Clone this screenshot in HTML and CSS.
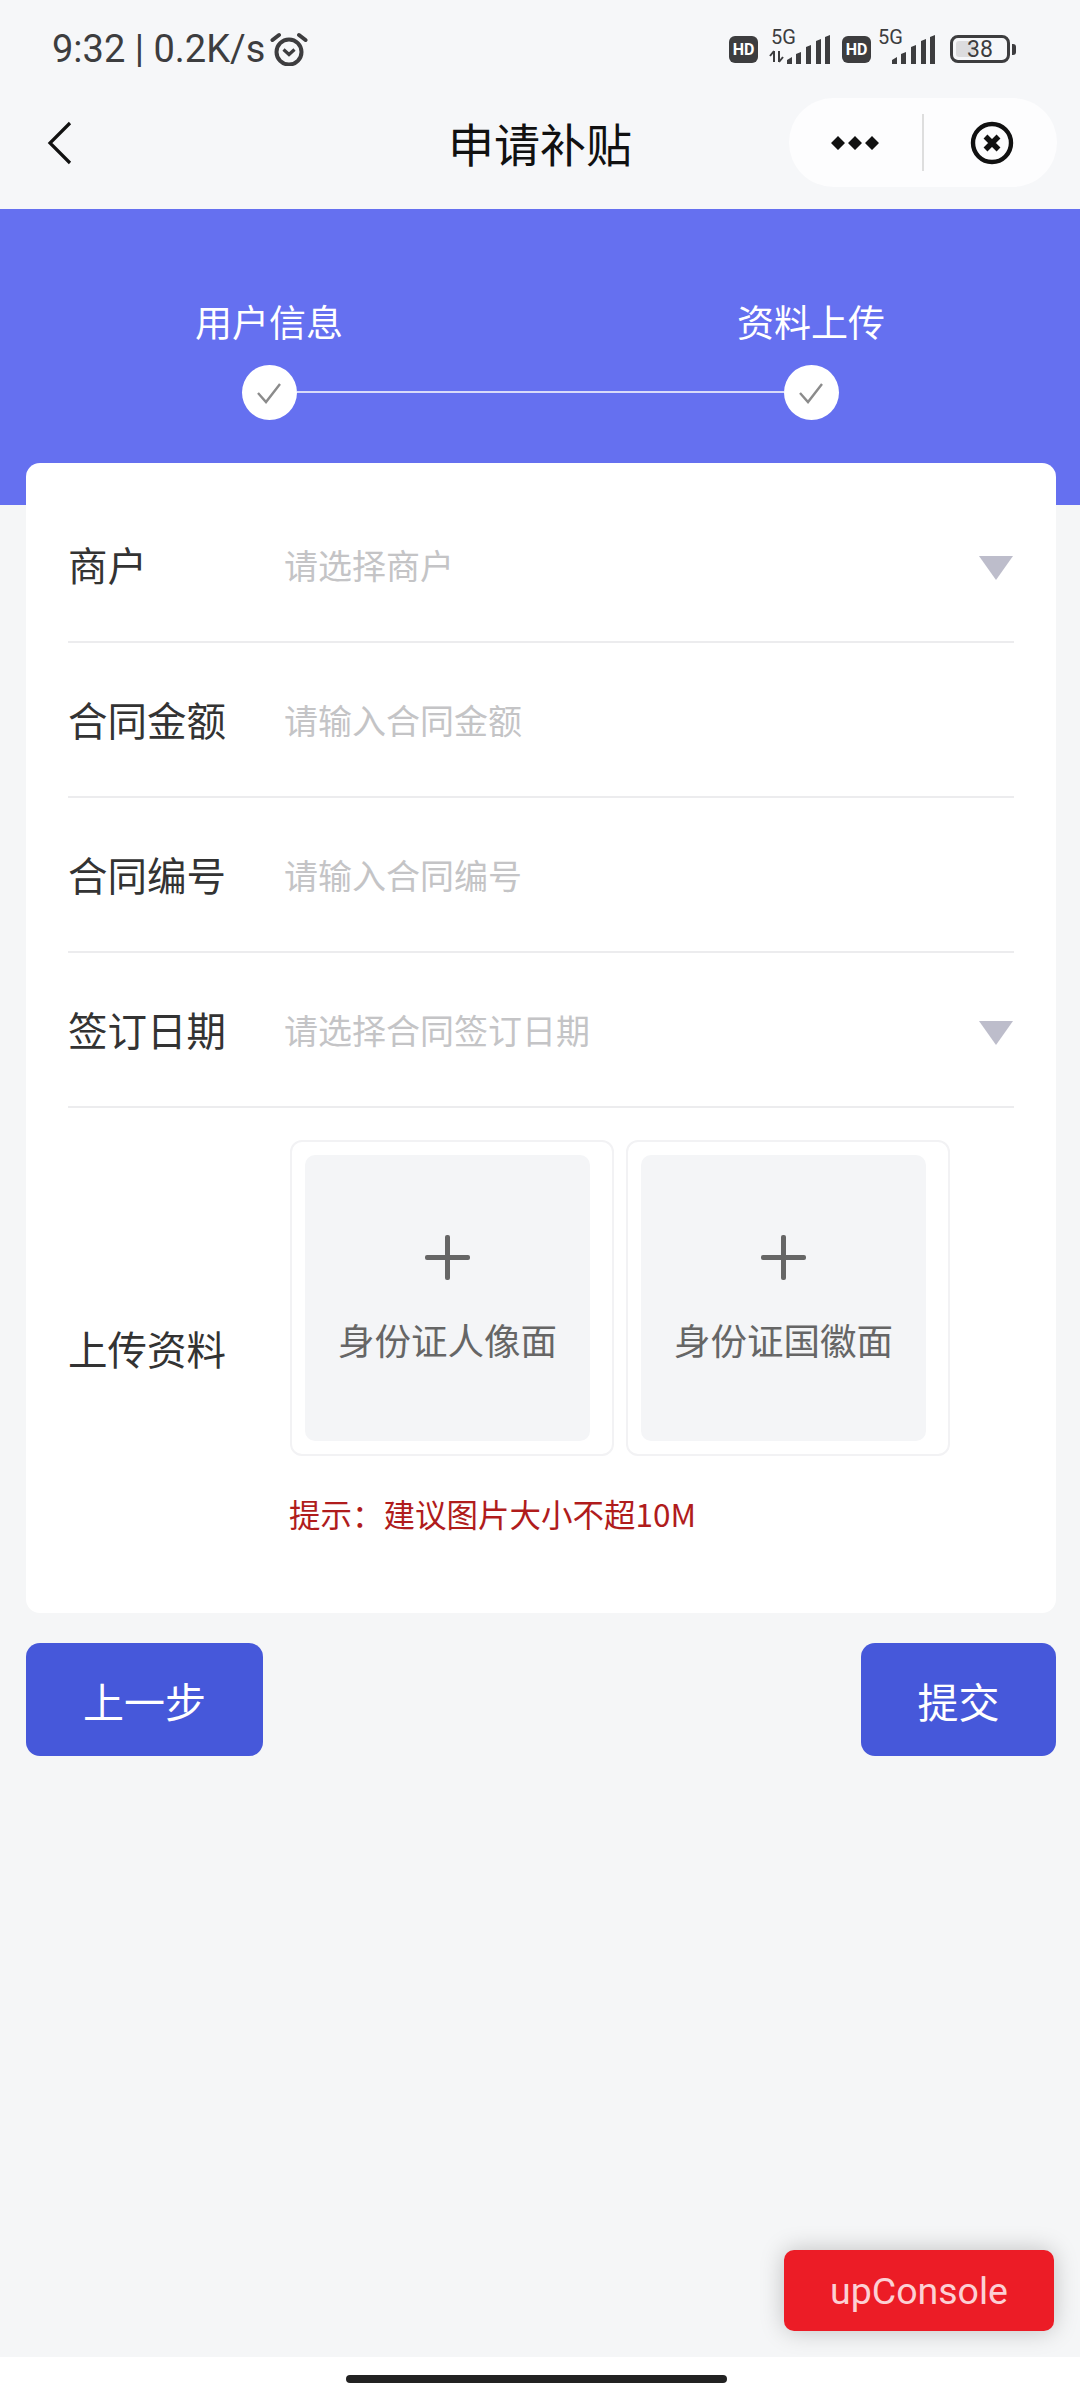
FILE: index.html
```html
<!DOCTYPE html>
<html lang="zh-CN">
<head>
  <meta charset="UTF-8" />
  <meta name="viewport" content="width=device-width, initial-scale=1.0" />
  <title>申请补贴</title>
  <link rel="stylesheet" href="styles.css">
</head>
<body>
  <div class="page">
    <div class="status-bar">
      <div class="status-left">
        <span>9:32 | 0.2K/s</span>
        <svg class="alarm" width="38" height="34" viewBox="0 0 38 34">
          <circle cx="19" cy="20" r="12.5" fill="none" stroke="#3d3d3f" stroke-width="4"/>
          <path d="M13.5 17.5l5.5 5 5.5-5" fill="none" stroke="#3d3d3f" stroke-width="3.2"/>
          <path d="M2.5 8L9 3M35.5 8L29 3" stroke="#3d3d3f" stroke-width="4" stroke-linecap="round"/>
        </svg>
      </div>
      <div class="status-right">
        <span class="hd">HD</span>
        <svg class="signal" width="62" height="42" viewBox="0 -6 62 42">
          <text x="2" y="13" font-size="20" font-family="Roboto, sans-serif" fill="#3d3d3f">5G</text>
          <path d="M5 20v11M1 25l4-5M10 20v11M10 31l4-5" stroke="#3d3d3f" stroke-width="2" fill="none"/>
          <path d="M18 33v-4l5-3v7zM27 33v-10l5-2v12zM37 33V16l5-2v19zM47 33V10l5-2v25zM56 33V6l5-2v29z" fill="#3d3d3f"/>
        </svg>
        <span class="hd hd-second">HD</span>
        <svg class="signal signal-short" width="58" height="42" viewBox="0 -6 58 42">
          <text x="0" y="13" font-size="20" font-family="Roboto, sans-serif" fill="#3d3d3f">5G</text>
          <path d="M14 33v-4l5-3v7zM23 33v-10l5-2v12zM33 33V16l5-2v19zM43 33V10l5-2v25zM52 33V6l5-2v29z" fill="#3d3d3f"/>
        </svg>
        <div class="battery">
          <div class="battery-body"><span class="battery-fill"></span><span class="battery-num">38</span></div>
          <span class="battery-nub"></span>
        </div>
      </div>
    </div>

    <div class="nav-bar">
      <svg class="back" width="26" height="44" viewBox="0 0 26 44">
        <path d="M23 2L3 22l20 20" fill="none" stroke="#111" stroke-width="3.2"/>
      </svg>
      <div class="nav-title">申请补贴</div>
      <div class="capsule">
        <svg class="capsule-dots" width="48" height="14" viewBox="0 0 48 14">
          <path d="M7 0l7 7-7 7-7-7zM24 0l7 7-7 7-7-7zM41 0l7 7-7 7-7-7z" fill="#111"/>
        </svg>
        <span class="capsule-line"></span>
        <svg class="capsule-close" width="44" height="44" viewBox="0 0 44 44">
          <circle cx="22" cy="22" r="19" fill="none" stroke="#111" stroke-width="4.4"/>
          <path d="M15.5 15.5l13 13M28.5 15.5l-13 13" stroke="#111" stroke-width="5.5"/>
        </svg>
      </div>
    </div>

    <div class="hero">
      <div class="steps">
        <div class="step">
          <div class="step-label">用户信息</div>
          <div class="step-dot">
            <svg width="26" height="22" viewBox="0 0 26 22"><path d="M2 11l8 9L24 2" fill="none" stroke="#8b8b8b" stroke-width="2.4"/></svg>
          </div>
        </div>
        <div class="step-line"></div>
        <div class="step">
          <div class="step-label">资料上传</div>
          <div class="step-dot">
            <svg width="26" height="22" viewBox="0 0 26 22"><path d="M2 11l8 9L24 2" fill="none" stroke="#8b8b8b" stroke-width="2.4"/></svg>
          </div>
        </div>
      </div>
    </div>

    <div class="card">
      <div class="row">
        <div class="row-label">商户</div>
        <div class="row-value">请选择商户</div>
        <span class="arrow"></span>
      </div>
      <div class="row">
        <div class="row-label">合同金额</div>
        <div class="row-value">请输入合同金额</div>
      </div>
      <div class="row">
        <div class="row-label">合同编号</div>
        <div class="row-value">请输入合同编号</div>
      </div>
      <div class="row">
        <div class="row-label">签订日期</div>
        <div class="row-value">请选择合同签订日期</div>
        <span class="arrow"></span>
      </div>
      <div class="upload-row">
        <div class="row-label">上传资料</div>
        <div class="upload-list">
          <div class="upload-box">
            <div class="upload-inner">
              <span class="plus"></span>
              <div class="upload-text">身份证人像面</div>
            </div>
          </div>
          <div class="upload-box">
            <div class="upload-inner">
              <span class="plus"></span>
              <div class="upload-text">身份证国徽面</div>
            </div>
          </div>
        </div>
      </div>
      <div class="tip">提示：建议图片大小不超10M</div>
    </div>

    <div class="actions">
      <div class="btn btn-prev">上一步</div>
      <div class="btn btn-submit">提交</div>
    </div>

    <div class="spacer"></div>

    <div class="home-bar"><span class="home-line"></span></div>
    <div class="console-btn">upConsole</div>
  </div>
</body>
</html>
```

FILE: styles.css
```css
* {
  box-sizing: border-box;
}
body {
  margin: 0;
  background-color: #f5f6f7;
  color: #333;
  font-family: "Noto Sans CJK SC", Roboto, sans-serif;
}
.page {
  position: relative;
  display: flex;
  flex-direction: column;
  height: 2400px;
  overflow: hidden;
}

/* status bar */
.status-bar {
  display: flex;
  justify-content: space-between;
  align-items: center;
  height: 98px;
  padding: 0 64px 0 52px;
  background-color: #f6f7f9;
  color: #3d3d3f;
}
.status-left {
  display: flex;
  align-items: center;
  gap: 5px;
  font-family: Roboto, sans-serif;
  font-size: 38px;
  line-height: 1;
}
.status-right {
  display: flex;
  align-items: center;
  height: 40px;
}
.hd {
  display: flex;
  justify-content: center;
  align-items: center;
  width: 29px;
  height: 27px;
  border-radius: 6px;
  background-color: #3d3d3f;
  color: #fff;
  font-family: Roboto, sans-serif;
  font-size: 16px;
  font-weight: 700;
}
.signal {
  margin-left: 11px;
  margin-bottom: 6px;
}
.hd-second {
  margin-left: 11px;
}
.signal-short {
  margin-left: 7px;
}
.battery {
  display: flex;
  align-items: center;
  gap: 2px;
  margin-left: 14px;
}
.battery-body {
  position: relative;
  display: flex;
  justify-content: center;
  align-items: center;
  width: 60px;
  height: 28px;
  border: 3px solid #3d3d3f;
  border-radius: 8px;
  font-family: Roboto, sans-serif;
  font-size: 23px;
}
.battery-fill {
  position: absolute;
  left: 3px;
  top: 3px;
  bottom: 3px;
  width: 19px;
  background-color: #dcdcde;
  border-radius: 3px;
}
.battery-num {
  position: relative;
}
.battery-nub {
  width: 4px;
  height: 11px;
  border-radius: 0 3px 3px 0;
  background-color: #3d3d3f;
}

/* nav */
.nav-bar {
  position: relative;
  display: flex;
  justify-content: center;
  align-items: center;
  height: 111px;
  padding-bottom: 23px;
  background-color: #f6f7f9;
  color: #111;
}
.back {
  position: absolute;
  left: 47px;
  top: 23px;
}
.nav-title {
  font-size: 46px;
  line-height: 1;
}
.capsule {
  position: absolute;
  top: 0;
  right: 23px;
  display: flex;
  align-items: center;
  width: 268px;
  height: 89px;
  border-radius: 45px;
  background-color: #fdfdfe;
}
.capsule-dots {
  margin-left: 42px;
}
.capsule-line {
  width: 2px;
  height: 57px;
  margin-left: 43px;
  background-color: #dedede;
}
.capsule-close {
  margin-left: 46px;
}

/* steps */
.hero {
  height: 296px;
  background-color: #6570f0;
  padding-top: 89px;
}
.steps {
  display: flex;
  justify-content: center;
  align-items: flex-end;
}
.step {
  display: flex;
  flex-direction: column;
  align-items: center;
  width: 146px;
  margin: 0 -45.5px;
}
.step-label {
  color: #fff;
  font-size: 37px;
  line-height: 46px;
  white-space: nowrap;
}
.step-dot {
  position: relative;
  z-index: 1;
  display: flex;
  justify-content: center;
  align-items: center;
  width: 55px;
  height: 55px;
  margin-top: 21px;
  border-radius: 50%;
  background-color: #fff;
}
.step-line {
  width: 487px;
  height: 2px;
  margin-bottom: 27px;
  background-color: #d8daf9;
}

/* form card */
.card {
  margin: -42px 24px 0 26px;
  padding: 25px 42px 0;
  height: 1150px;
  border-radius: 14px;
  background-color: #fff;
}
.row {
  display: flex;
  align-items: center;
  height: 155px;
  border-bottom: 2px solid #ececee;
}
.row-label {
  width: 216px;
  flex-shrink: 0;
  margin-top: -2px;
  color: #333;
  font-size: 39.5px;
}
.row-value {
  flex: 1;
  color: #c4c4c6;
  font-size: 34px;
}
.arrow {
  width: 0;
  height: 0;
  margin: 6px 1px 0 0;
  border-left: 17px solid transparent;
  border-right: 17px solid transparent;
  border-top: 24px solid #bdbdcb;
}
.upload-row {
  display: flex;
  align-items: flex-start;
  margin-top: 32px;
}
.upload-row .row-label {
  width: 222px;
  margin-top: 179px;
}
.upload-list {
  display: flex;
  gap: 12px;
}
.upload-box {
  width: 324px;
  height: 316px;
  padding: 13px 22px 13px 13px;
  border: 2px solid #f2f2f4;
  border-radius: 12px;
}
.upload-inner {
  display: flex;
  flex-direction: column;
  align-items: center;
  height: 100%;
  border-radius: 10px;
  background-color: #f4f5f7;
  padding-top: 80px;
}
.plus {
  position: relative;
  display: block;
  width: 45px;
  height: 45px;
}
.plus::before,
.plus::after {
  content: "";
  position: absolute;
  background-color: #666;
  border-radius: 2px;
}
.plus::before {
  left: 0;
  right: 0;
  top: 20px;
  height: 5px;
}
.plus::after {
  top: 0;
  bottom: 0;
  left: 20px;
  width: 5px;
}
.upload-text {
  margin-top: 34px;
  color: #666;
  font-size: 36.5px;
  line-height: 52px;
  white-space: nowrap;
}
.tip {
  margin: 35px 0 0 221px;
  color: #b01c1c;
  font-size: 31.5px;
  line-height: 44px;
}

/* buttons */
.actions {
  display: flex;
  justify-content: space-between;
  margin: 30px 24px 0 26px;
}
.btn {
  display: flex;
  justify-content: center;
  align-items: center;
  height: 113px;
  border-radius: 14px;
  background-color: #4658da;
  color: #fff;
  font-size: 41px;
}
.btn-prev {
  width: 237px;
}
.btn-submit {
  width: 195px;
}

.spacer {
  flex: 1;
}

/* bottom */
.home-bar {
  display: flex;
  justify-content: center;
  align-items: center;
  height: 43px;
  background-color: #fff;
}
.home-line {
  width: 381px;
  height: 8px;
  margin-right: 8px;
  border-radius: 4px;
  background-color: #222;
}
.console-btn {
  position: absolute;
  left: 784px;
  top: 2250px;
  display: flex;
  justify-content: center;
  align-items: center;
  width: 270px;
  height: 81px;
  border-radius: 10px;
  background-color: #ec1c26;
  box-shadow: 0 0 24px rgba(0, 0, 0, 0.22);
  color: #fcd0d4;
  font-family: Roboto, sans-serif;
  font-size: 37.5px;
}
```
